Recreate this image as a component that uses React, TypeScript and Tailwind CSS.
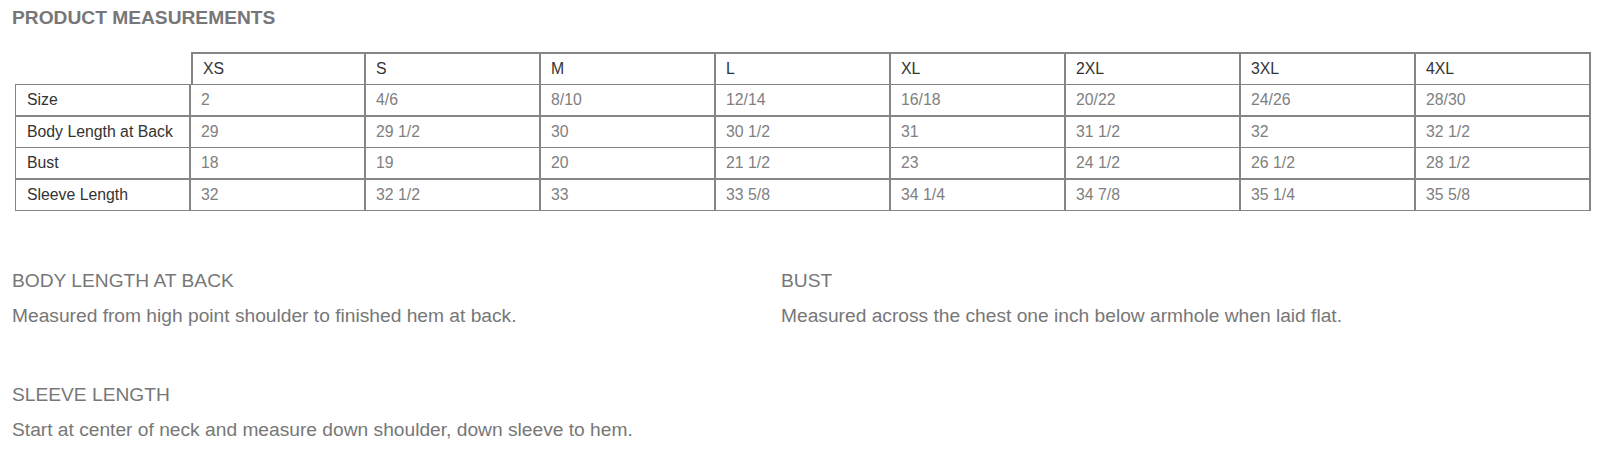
import React from "react";

const sizes = ["XS", "S", "M", "L", "XL", "2XL", "3XL", "4XL"];

// each row: label, values, bottom border width class
const rows: { label: string; values: string[]; bottom: string; h: string }[] = [
  { label: "Size", values: ["2", "4/6", "8/10", "12/14", "16/18", "20/22", "24/26", "28/30"], bottom: "border-b-2", h: "h-[32px]" },
  { label: "Body Length at Back", values: ["29", "29 1/2", "30", "30 1/2", "31", "31 1/2", "32", "32 1/2"], bottom: "border-b", h: "h-[31px]" },
  { label: "Bust", values: ["18", "19", "20", "21 1/2", "23", "24 1/2", "26 1/2", "28 1/2"], bottom: "border-b-2", h: "h-[32px]" },
  { label: "Sleeve Length", values: ["32", "32 1/2", "33", "33 5/8", "34 1/4", "34 7/8", "35 1/4", "35 5/8"], bottom: "border-b", h: "h-[31px]" },
];

const notes = [
  { title: "BODY LENGTH AT BACK", text: "Measured from high point shoulder to finished hem at back." },
  { title: "BUST", text: "Measured across the chest one inch below armhole when laid flat." },
  { title: "SLEEVE LENGTH", text: "Start at center of neck and measure down shoulder, down sleeve to hem." },
];

const App = () => {
  return (
    <div className="min-h-screen bg-white pl-[12px] pt-[7px] font-['Liberation_Sans',Arial,sans-serif]">
      <h2 className="text-[19.2px] font-bold leading-[22px] text-[#777777]">PRODUCT MEASUREMENTS</h2>

      {/* size chart */}
      <div className="mt-[23px] ml-[3px] grid grid-cols-[176px_repeat(8,175px)] text-[15.8px]">
        <div className="h-[33px] border-b border-[#858585]" />
        {sizes.map((s, i) => (
          <div
            key={s}
            className={`h-[33px] flex items-center pl-[10px] border-t-2 border-b border-r-2 border-[#858585] text-[#333333] ${i === 0 ? "border-l-2 pl-[9px]" : ""}`}
          >
            {s}
          </div>
        ))}
        {rows.map((r) => (
          <React.Fragment key={r.label}>
            <div className={`${r.h} flex items-center pl-[11px] border-l border-r-2 ${r.bottom} border-[#858585] text-[#333333]`}>
              {r.label}
            </div>
            {r.values.map((v, i) => (
              <div key={i} className={`${r.h} flex items-center pl-[10px] border-r-2 ${r.bottom} border-[#858585] text-[#808080]`}>
                {v}
              </div>
            ))}
          </React.Fragment>
        ))}
      </div>

      {/* notes */}
      <div className="mt-[59px] grid grid-cols-[769px_1fr] gap-y-[57px] text-[19.2px] leading-[22px] text-[#777777]">
        {notes.map((n) => (
          <div key={n.title} className="flex flex-col gap-[13px]">
            <p>{n.title}</p>
            <p>{n.text}</p>
          </div>
        ))}
      </div>
    </div>
  );
};

export default App;
